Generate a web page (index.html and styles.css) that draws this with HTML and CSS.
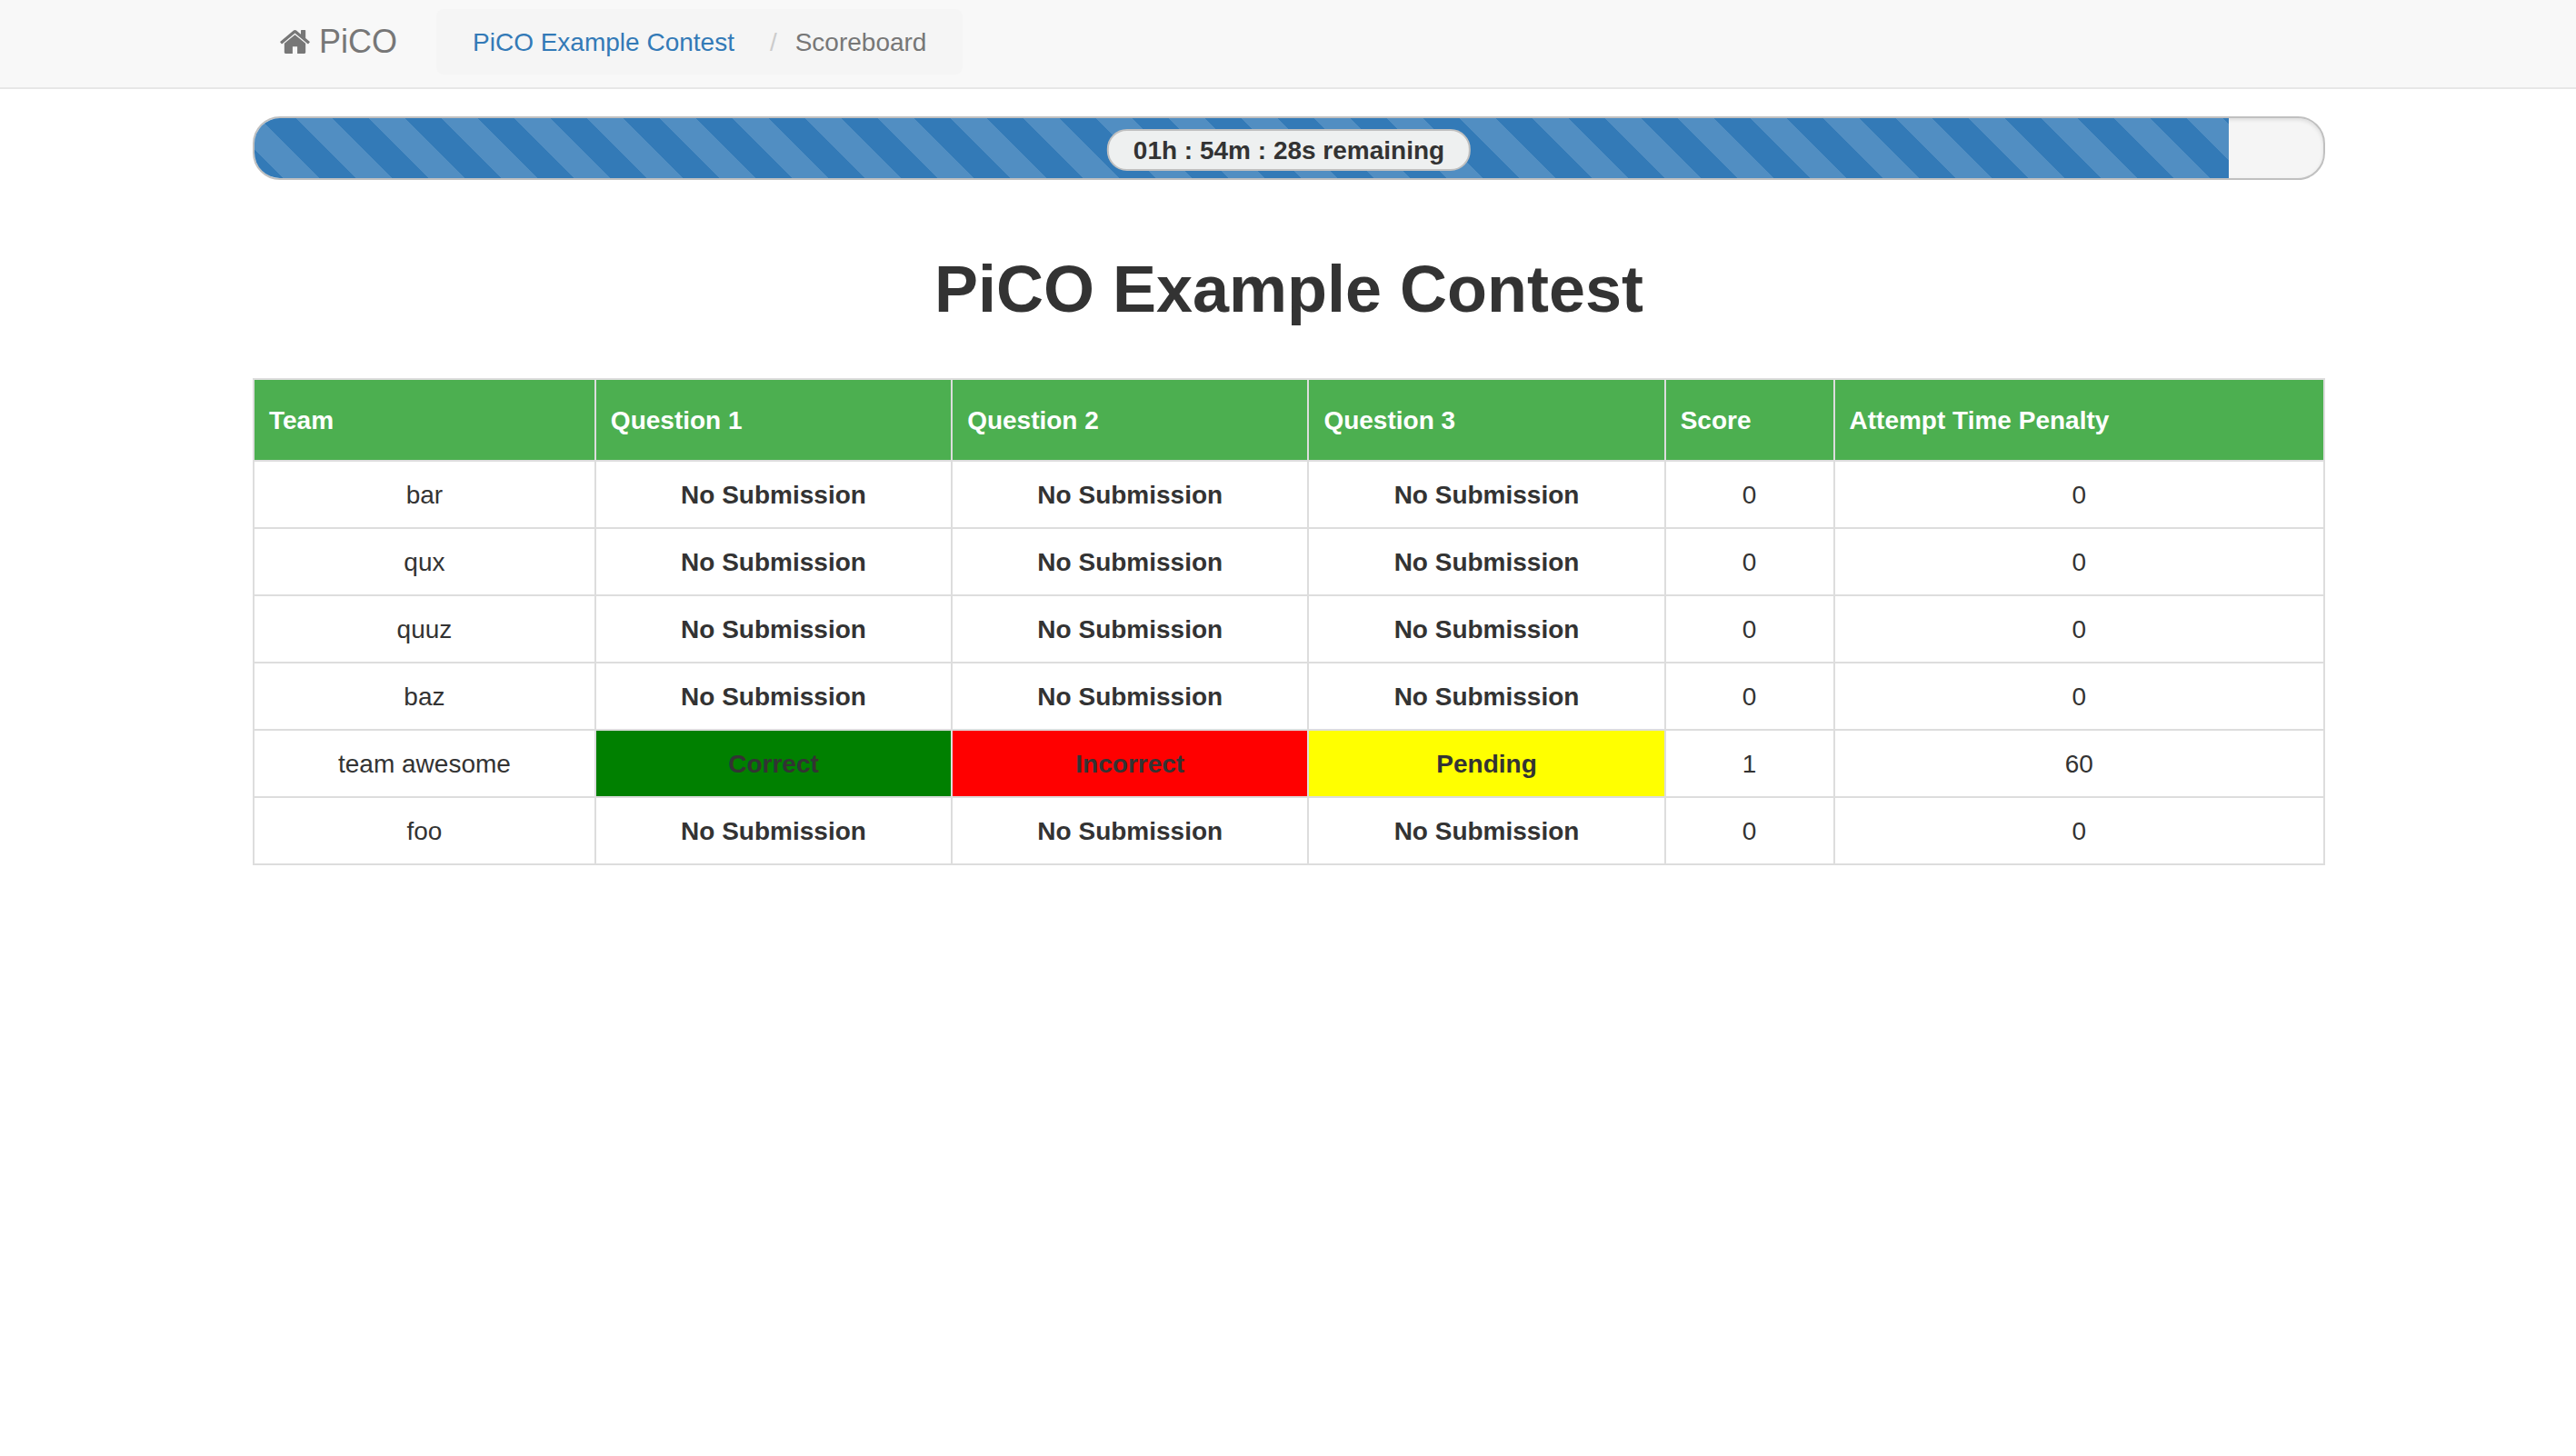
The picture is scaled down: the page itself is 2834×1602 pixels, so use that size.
FILE: index.html
```html
<!DOCTYPE html>
<html lang="en">
<head>
<meta charset="utf-8">
<meta name="viewport" content="width=device-width, initial-scale=1">
<title>PiCO Example Contest - Scoreboard</title>
<link rel="stylesheet" href="styles.css">
</head>
<body>
<header class="navbar">
  <div class="container navbar-inner">
    <a class="brand" href="#">
      <svg class="brand-icon" viewBox="89 253 1614 1283" aria-hidden="true"><path d="M1472 992v480q0 26-19 45t-45 19h-384v-384h-256v384h-384q-26 0-45-19t-19-45v-480q0-1 .5-3t.5-3l575-474 575 474q1 2 1 6zm223-69l-62 74q-8 9-21 11h-3q-13 0-21-7l-692-577-692 577q-12 8-24 7-13-2-21-11l-62-74q-8-10-7-23.500t11-21.500l719-599q32-26 76-26t76 26l244 204v-195q0-14 9-23t23-9h192q14 0 23 9t9 23v408l219 182q10 8 11 21.500t-7 23.500z"/></svg>
      <span>PiCO</span>
    </a>
    <nav aria-label="Breadcrumb">
      <ol class="breadcrumb">
        <li><a class="breadcrumb-link" href="#">PiCO Example Contest</a></li>
        <li class="breadcrumb-current" aria-current="page">Scoreboard</li>
      </ol>
    </nav>
  </div>
</header>
<main class="container">
  <div class="progress">
    <div class="progress-bar" style="width: 95.43%"></div>
    <span class="progress-label">01h : 54m : 28s remaining</span>
  </div>
  <h1 class="title">PiCO Example Contest</h1>
  <table class="scoreboard">
    <colgroup>
      <col class="col-team">
      <col class="col-question" span="3">
      <col class="col-score">
      <col class="col-penalty">
    </colgroup>
    <thead>
      <tr><th scope="col">Team</th><th scope="col">Question 1</th><th scope="col">Question 2</th><th scope="col">Question 3</th><th scope="col">Score</th><th scope="col">Attempt Time Penalty</th></tr>
    </thead>
    <tbody>
      <tr><td>bar</td><td class="result">No Submission</td><td class="result">No Submission</td><td class="result">No Submission</td><td>0</td><td>0</td></tr>
      <tr><td>qux</td><td class="result">No Submission</td><td class="result">No Submission</td><td class="result">No Submission</td><td>0</td><td>0</td></tr>
      <tr><td>quuz</td><td class="result">No Submission</td><td class="result">No Submission</td><td class="result">No Submission</td><td>0</td><td>0</td></tr>
      <tr><td>baz</td><td class="result">No Submission</td><td class="result">No Submission</td><td class="result">No Submission</td><td>0</td><td>0</td></tr>
      <tr><td>team awesome</td><td class="result correct">Correct</td><td class="result incorrect">Incorrect</td><td class="result pending">Pending</td><td>1</td><td>60</td></tr>
      <tr><td>foo</td><td class="result">No Submission</td><td class="result">No Submission</td><td class="result">No Submission</td><td>0</td><td>0</td></tr>
    </tbody>
  </table>
</main>
</body>
</html>
```
FILE: styles.css
```css
*,
*::before,
*::after {
  box-sizing: border-box;
}

body {
  margin: 0;
  background: #fff;
  color: #333;
  font-family: "Helvetica Neue", Helvetica, "Liberation Sans", Arial, sans-serif;
  font-size: 28px;
  line-height: 40px;
}

.container {
  max-width: 2340px;
  margin: 0 auto;
  padding: 0 29px 0 31px;
}

.navbar {
  margin-bottom: 30px;
  background: #f8f8f8;
  border-bottom: 2px solid #e7e7e7;
}

.navbar-inner {
  display: flex;
  align-items: flex-start;
  gap: 43px;
  padding-top: 10px;
  padding-bottom: 14px;
}

.brand {
  display: flex;
  align-items: center;
  gap: 10px;
  padding: 16px 0 0 30px;
  color: #777;
  font-size: 36px;
  text-decoration: none;
}

.brand-icon {
  width: 33px;
  height: 26px;
  fill: currentColor;
}

.breadcrumb {
  display: flex;
  margin: 0;
  padding: 17px 40px 15px;
  list-style: none;
  background: #f5f5f5;
  border-radius: 8px;
}

.breadcrumb-link {
  color: #337ab7;
  text-decoration: none;
}

.breadcrumb-current {
  margin-left: 29px;
  color: #777;
}

.breadcrumb-current::before {
  content: "/";
  padding: 0 20px 0 10px;
  color: #ccc;
}

.progress {
  position: relative;
  height: 70px;
  overflow: hidden;
  background: #f5f5f5;
  border: 2px solid #c0c0c0;
  border-radius: 30px;
  box-shadow: inset 0 2px 4px rgba(0, 0, 0, 0.1);
}

.progress-bar {
  height: 100%;
  background-color: #337ab7;
  background-image: linear-gradient(45deg, rgba(255, 255, 255, 0.15) 25%, transparent 25%, transparent 50%, rgba(255, 255, 255, 0.15) 50%, rgba(255, 255, 255, 0.15) 75%, transparent 75%, transparent);
  background-position: 46px 0;
  background-size: 80px 80px;
}

.progress-label {
  position: absolute;
  top: 12px;
  left: 50%;
  padding: 2px 27px 0;
  transform: translateX(-50%);
  background: #eef0f0;
  border: 2px solid #c0c0c0;
  border-radius: 22px;
  font-weight: bold;
  white-space: nowrap;
}

.title {
  margin: 80px 0 58px;
  font-size: 72px;
  line-height: 80px;
  text-align: center;
}

.scoreboard {
  width: 100%;
  table-layout: fixed;
  border-collapse: collapse;
}

.col-team {
  width: 16.5%;
}

.col-question {
  width: 17.22%;
}

.col-score {
  width: 8.16%;
}

.col-penalty {
  width: 23.68%;
}

.scoreboard th,
.scoreboard td {
  padding: 17px 16px 15px;
  border: 2px solid #ddd;
  text-align: center;
}

.scoreboard th {
  padding-top: 25px;
  padding-bottom: 23px;
  background: #4caf50;
  color: #fff;
  text-align: left;
}

.scoreboard .result {
  font-weight: bold;
}

.scoreboard .correct {
  background: green;
}

.scoreboard .incorrect {
  background: red;
}

.scoreboard .pending {
  background: yellow;
}
```
